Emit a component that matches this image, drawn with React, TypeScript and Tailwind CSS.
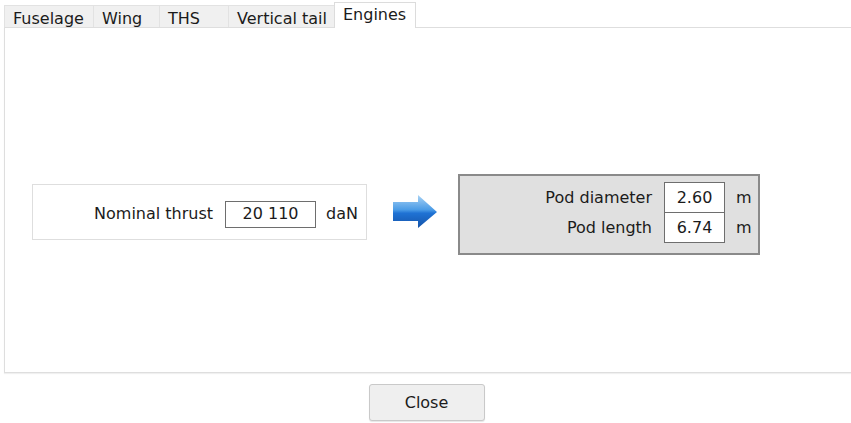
const TABS = ["Fuselage", "Wing", "THS", "Vertical tail", "Engines"]
const TAB_WIDTHS = [89, 66, 69, 106, 82]

function BlueArrow() {
  return (
    <svg width="46" height="34" viewBox="0 0 46 34">
      <defs>
        <linearGradient id="arrowFill" x1="0" y1="0" x2="0" y2="1">
          <stop offset="0" stopColor="#a9d3f5" />
          <stop offset="0.45" stopColor="#4a9be6" />
          <stop offset="0.55" stopColor="#1f72d4" />
          <stop offset="1" stopColor="#1553a8" />
        </linearGradient>
      </defs>
      <path d="M1 7 H26 V0 L45 17 L26 33 V26 H1 Z" fill="url(#arrowFill)" />
    </svg>
  )
}

export default function App() {
  const active = "Engines"

  return (
    <div
      className="w-[851px] h-[423px] bg-white text-[16px] text-[#1b1b1b] overflow-hidden flex flex-col"
      style={{ fontFamily: '"DejaVu Sans", Verdana, sans-serif' }}
    >
      {/* Tab strip */}
      <div className="flex items-end h-[27px] pl-[4px]">
        {TABS.map((tab, i) =>
          tab === active ? (
            <div
              key={tab}
              style={{ width: TAB_WIDTHS[i] }}
              className="h-[26px] -mb-px relative z-10 bg-white border border-b-0 border-[#dcdcdc] pl-[8px] pt-[2px] leading-[19px] whitespace-nowrap"
            >
              {tab}
            </div>
          ) : (
            <div
              key={tab}
              style={{ width: TAB_WIDTHS[i] }}
              className="h-[22px] bg-[#f0f0f0] border-l border-t border-[#e2e2e2] pl-[8px] pt-[3px] leading-[19px] whitespace-nowrap overflow-hidden"
            >
              {tab}
            </div>
          )
        )}
      </div>

      {/* Tab panel */}
      <div className="ml-[4px] h-[346px] border border-r-0 border-[#dedede] shadow-[0_1px_1px_rgba(0,0,0,0.06)] flex items-start">
        {/* Input box */}
        <div className="ml-[27px] mt-[156px] w-[335px] h-[56px] border border-[#dedede] bg-white flex items-center justify-end pr-[8px] pt-[4px]">
          <span>Nominal thrust</span>
          <div className="ml-[12px] w-[91px] h-[27px] border border-[#6e6e6e] flex items-center justify-center">
            20 110
          </div>
          <span className="ml-[10px]">daN</span>
        </div>

        {/* Arrow */}
        <div className="ml-[25px] mt-[167px]">
          <BlueArrow />
        </div>

        {/* Output box */}
        <div className="ml-[20px] mt-[146px] w-[302px] h-[81px] bg-[#e0e0e0] border-2 border-[#8a8a8a] pt-[6px] pr-[10px] flex flex-col items-end">
          <div className="flex items-center">
            <span>Pod diameter</span>
            <div className="ml-[12px] w-[61px] h-[31px] border border-[#6e6e6e] bg-white flex items-center justify-center">
              2.60
            </div>
            <span className="ml-[11px] w-[12px]">m</span>
          </div>
          <div className="flex items-center -mt-px">
            <span>Pod length</span>
            <div className="ml-[12px] w-[61px] h-[31px] border border-[#6e6e6e] bg-white flex items-center justify-center">
              6.74
            </div>
            <span className="ml-[11px] w-[12px]">m</span>
          </div>
        </div>
      </div>

      {/* Footer */}
      <div className="flex justify-center pt-[11px] pl-[2px]">
        <button className="w-[116px] h-[37px] rounded-[3px] border border-[#c9c9c9] bg-[#efefef] shadow-[0_1px_1px_rgba(0,0,0,0.1)]">
          Close
        </button>
      </div>
    </div>
  )
}
